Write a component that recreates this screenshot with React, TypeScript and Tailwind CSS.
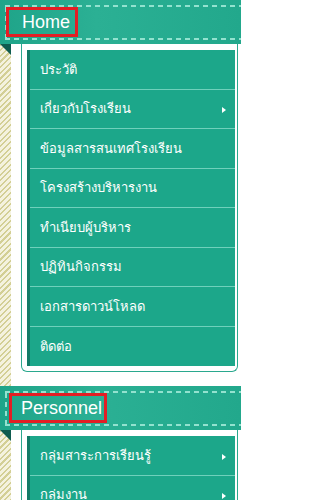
import React from "react"

interface MenuItem {
  label: string
  sub?: boolean
}

const homeItems: MenuItem[] = [
  { label: "ประวัติ" },
  { label: "เกี่ยวกับโรงเรียน", sub: true },
  { label: "ข้อมูลสารสนเทศโรงเรียน" },
  { label: "โครงสร้างบริหารงาน" },
  { label: "ทำเนียบผู้บริหาร" },
  { label: "ปฏิทินกิจกรรม" },
  { label: "เอกสารดาวน์โหลด" },
  { label: "ติดต่อ" },
]

const personnelItems: MenuItem[] = [
  { label: "กลุ่มสาระการเรียนรู้", sub: true },
  { label: "กลุ่มงาน", sub: true },
  { label: "บุคลากรสายสนับสนุน" },
]

function SectionHeader({ title, boxClass }: { title: string; boxClass: string }) {
  return (
    <div className="h-[44px] pt-[5px] pl-[5px] bg-[linear-gradient(90deg,#1fa489_0%,#2bb094_40%,#22a88c_100%)]">
      <div className="h-[2px] bg-[repeating-linear-gradient(90deg,#93e2cf_0_5px,transparent_5px_9px)]" />
      <div className="flex h-[31px]">
        <div className="w-[2px] bg-[repeating-linear-gradient(180deg,#93e2cf_0_5px,transparent_5px_9px)]" />
        <div
          className={`flex items-center h-[30px] border-[3px] border-[#e31e24] text-white text-[18px] leading-none font-['Liberation_Sans',Arial,sans-serif] ${boxClass}`}
        >
          {title}
        </div>
      </div>
      <div className="h-[2px] bg-[repeating-linear-gradient(90deg,#93e2cf_0_5px,transparent_5px_9px)]" />
    </div>
  )
}

function Menu({ items, last }: { items: MenuItem[]; last?: boolean }) {
  return (
    <div className="flex">
      <div className="w-[11px] shrink-0 bg-[repeating-linear-gradient(135deg,#d3cf95_0_1.5px,#f4f2de_1.5px_4px)]">
        <svg width="11" height="11" viewBox="0 0 11 11" className="block">
          <polygon points="0,0 11,0 11,11" fill="#0f5c4f" />
        </svg>
      </div>
      <div className={`flex-1 bg-white pl-[10px] pr-[3px] ${last ? "" : "pb-[14px]"}`}>
        <div className="border-x border-b border-[#2aa88e] rounded-b-[6px] pt-[6px] pl-[5px] pr-[2px] pb-[5px]">
          <ul className="bg-[#1ca78a] border-l-[3px] border-[#137b67]">
            {items.map((item, i) => (
              <li
                key={item.label}
                className={`flex items-center justify-between h-[39.5px] pl-[10px] pr-[9px] text-white text-[13px] font-['Noto_Sans','Liberation_Sans',sans-serif] ${
                  i < items.length - 1 ? "border-b border-[#6fd0bb]" : ""
                }`}
              >
                <span>{item.label}</span>
                {item.sub && (
                  <span className="mt-[3px] w-0 h-0 border-y-[3.5px] border-y-transparent border-l-[4px] border-l-white" />
                )}
              </li>
            ))}
          </ul>
        </div>
      </div>
    </div>
  )
}

export default function App() {
  return (
    <div className="w-[241px] h-[500px] overflow-hidden bg-white">
      <SectionHeader title="Home" boxClass="-ml-[1px] w-[72px] pl-[13px]" />
      <Menu items={homeItems} />
      <SectionHeader title="Personnel" boxClass="ml-[2px] w-[98px] pl-[9px]" />
      <Menu items={personnelItems} last />
    </div>
  )
}
